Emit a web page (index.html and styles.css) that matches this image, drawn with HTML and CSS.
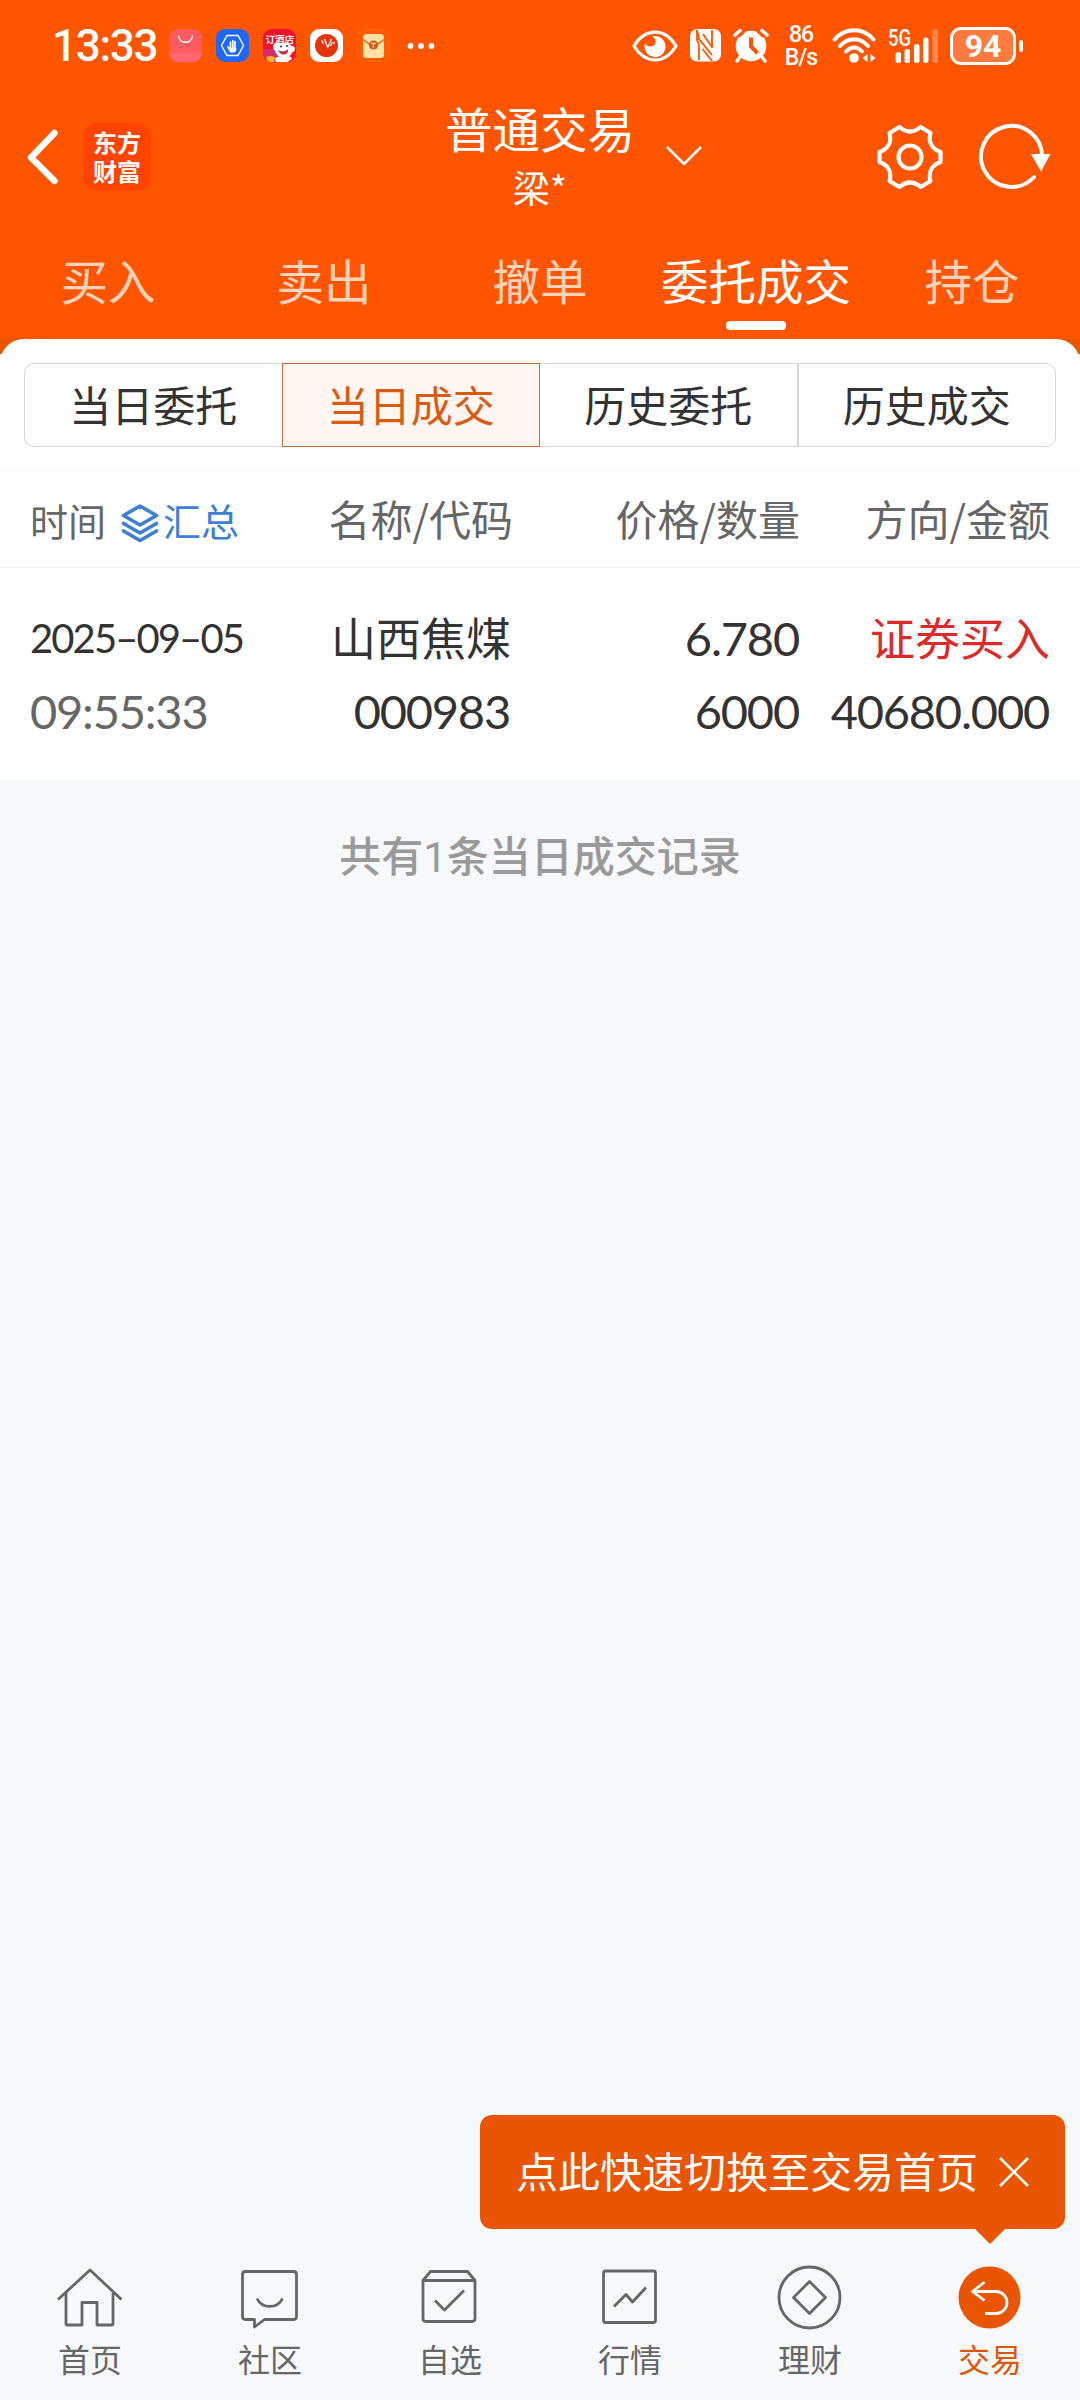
FILE: index.html
```html
<!DOCTYPE html>
<html lang="zh-CN">
  <head>
    <meta charset="UTF-8">
    <meta name="viewport" content="width=device-width, initial-scale=1.0">
    <title>普通交易</title>
    <link rel="stylesheet" href="styles.css">
  </head>
  <body>
    <div class="top">
      <div class="status-bar">
        <span class="clock">13:33</span>
        <div class="app-icons">
          <svg width="33" height="33" viewBox="0 0 33 33">
            <rect width="33" height="33" rx="9" fill="#ff5a60"/>
            <path d="M0 24h33a9 9 0 0 1-9 9H9a9 9 0 0 1-9-9z" fill="#ff6872"/>
            <path d="M9.500 6.500c1 9 13 9 14 0" fill="none" stroke="#fff" stroke-width="1.500"/>
          </svg>
          <svg width="33" height="33" viewBox="0 0 33 33">
            <rect width="33" height="33" rx="9" fill="#1f68f5"/>
            <path d="M11 6.500h11l5.500 10-5.500 10H11l-5.500-10z" fill="none" stroke="#fff" stroke-width="1.400"/>
            <path d="M14.500 13v6M16.800 11.500v8M19 12.500v7" stroke="#fff" stroke-width="1.700" stroke-linecap="round"/>
            <path d="M11 16.500l3 2h6c1 3-.5 4.500-2 5h-3.500c-1-1-3-4-3.500-7z" fill="#fff"/>
          </svg>
          <svg width="33" height="33" viewBox="0 0 33 33">
            <rect width="33" height="33" rx="9" fill="#f0102c"/>
            <path d="M0 20h10l20 12-6 1H9a9 9 0 0 1-9-9z" fill="#d52a6c"/>
            <ellipse cx="21" cy="21" rx="9" ry="7.500" fill="#fff"/>
            <circle cx="14" cy="18" r="4" fill="#fff"/>
            <circle cx="29" cy="20" r="3" fill="#fff"/>
            <path d="M12 30c2-4 16-5 17 0l-5 3H13z" fill="#fff"/>
            <path d="M15 21c3 2 6 2 10-.5 1 5-7 8-10 .5z" fill="#c62a32"/>
            <circle cx="18" cy="17.500" r="1" fill="#333"/>
            <circle cx="24" cy="17" r="1" fill="#333"/>
            <path d="M3 28l4-1 5 1-1 5H8c-3 0-4-2-5-5z" fill="#ffb52c"/>
            <text class="app-text" x="2.500" y="14">订酒店</text>
          </svg>
          <svg width="33" height="33" viewBox="0 0 33 33">
            <rect width="33" height="33" rx="9" fill="#fff"/>
            <circle cx="16.500" cy="16.500" r="11.500" fill="#e63408"/>
            <path d="M11.500 11l2 4M14.500 10l3 8M17.500 19l4-9M20.500 17l2-4M23.500 15l1-2" stroke="#fff" stroke-width="1.300"/>
          </svg>
          <svg width="33" height="33" viewBox="0 0 33 33">
            <rect x=".5" y=".5" width="32" height="32" rx="9" fill="#ff5a00" stroke="#ff6b0a"/>
            <rect x="6" y="5" width="21" height="24" rx="3.500" fill="#ffe2a6"/>
            <path d="M6 10.500l7 5M27 10.500l-7 5" stroke="#c8641c" stroke-width="1.200"/>
            <circle cx="16.500" cy="16" r="4.600" fill="#d65a14"/>
            <path d="M14 14.300h5M16.500 14.300v4.500" stroke="#ffe2a6" stroke-width="1.300"/>
          </svg>
        </div>
        <svg class="more" width="28" height="8" viewBox="0 0 28 8" fill="#fff">
          <circle cx="3.500" cy="4" r="2.900"/><circle cx="14" cy="4" r="2.900"/><circle cx="24.500" cy="4" r="2.900"/>
        </svg>

        <div class="status-right">
          <svg width="48" height="34" viewBox="0 0 48 34">
            <path d="M3 17C14-1.500 34-1.500 45 17 34 35.500 14 35.500 3 17z" fill="none" stroke="#fff" stroke-width="3.200" stroke-linejoin="round"/>
            <path d="M21 7.500c4.500 2 5 8 .5 9.500-3.500 1.200-6-.5-7.500-2.500a10.500 10.500 0 1 0 7-7z" fill="#fff"/>
          </svg>
          <svg class="nfc" width="31" height="33" viewBox="0 0 31 33">
            <rect width="31" height="32.500" rx="7" fill="#fff"/>
            <g fill="none" stroke="#ff5500" stroke-width="1.800">
              <path d="M7 1v10q2 3 2 8v12M22 1v18"/>
              <path d="M7 1l2 9 13 16M13 5l9 13M12.500 20l9.500 12" />
            </g>
          </svg>
          <svg class="alarm" width="36" height="35" viewBox="0 0 36 35">
            <circle cx="18" cy="18" r="15.300" fill="#fff"/>
            <path d="M2 7l5-4.500M34 7l-5-4.500M7 29l-3 4M29 29l3 4" stroke="#fff" stroke-width="3.500" stroke-linecap="round"/>
            <path d="M6 9l6-6M30 9l-6-6" stroke="#ff5500" stroke-width="1.800"/>
            <path d="M18 9.500v9l6.500 6.500" fill="none" stroke="#ff5500" stroke-width="4"/>
          </svg>
          <div class="net-speed"><span>86</span><span>B/s</span></div>
          <svg class="wifi" width="45" height="36" viewBox="0 0 45 36">
            <g fill="none" stroke="#fff" stroke-width="4" stroke-linecap="round">
              <path d="M2.500 11.500C13-.8 31-.8 41.500 11.500"/>
              <path d="M8 18c8-9 20-9 28 0"/>
              <path d="M14 23.500c5-5.500 11-5.500 16 0"/>
            </g>
            <circle cx="22" cy="30" r="4.800" fill="#fff"/>
            <path d="M35.500 26v8l-5-4zM38.500 26v8l5-4z" fill="#fff"/>
          </svg>
          <svg class="signal" width="52" height="36" viewBox="0 0 52 36">
            <text class="g-text" x="0" y="18" textLength="23" lengthAdjust="spacingAndGlyphs">5G</text>
            <g fill="#fff">
              <rect x="7.500" y="24" width="5.500" height="11" rx="2.500"/>
              <rect x="16.500" y="21" width="5.500" height="14" rx="2.500"/>
              <rect x="26" y="16" width="5.500" height="19" rx="2.500"/>
              <rect x="35" y="9.500" width="5.500" height="25.500" rx="2.500"/>
              <rect x="44.500" y="1" width="5.500" height="34" rx="2.500" opacity=".3"/>
            </g>
          </svg>
          <div class="battery">94</div>
          <span class="battery-cap"></span>
        </div>
      </div>

      <header class="header">
        <div class="header-left">
          <svg width="34" height="58" viewBox="0 0 34 58">
            <path d="M29.500 5L6 29.500 29.500 53" fill="none" stroke="#fff" stroke-width="6.500" stroke-linecap="round" stroke-linejoin="round"/>
          </svg>
          <div class="logo"><span>东方</span><span>财富</span></div>
        </div>
        <div class="header-title">
          <h1>普通交易</h1>
          <p>梁*</p>
        </div>
        <div class="header-right">
          <svg class="down" width="38" height="22" viewBox="0 0 38 22">
            <path d="M2 2l17 17L36 2" fill="none" stroke="#fff" stroke-width="2.600"/>
          </svg>
          <svg class="gear" width="68" height="68" viewBox="0 0 68 68" fill="none" stroke="#fff" stroke-width="4.200" stroke-linejoin="round">
            <path d="M23.500 4Q34 13 44.500 4L54.500 10C52 19 56 26 64.500 29V39C56 42 52 49 54.500 58L44.500 64Q34 55 23.500 64L13.500 58C16 49 12 42 3.500 39V29C12 26 16 19 13.500 10Z"/>
            <circle cx="34" cy="34" r="11.500"/>
          </svg>
          <svg class="refresh" width="74" height="68" viewBox="0 0 74 68">
            <path d="M64 34A30.500 30.500 0 1 0 56 54" fill="none" stroke="#fff" stroke-width="4" stroke-linecap="round"/>
            <path d="M53 31h19.500l-9.500 17.500z" fill="#fff"/>
          </svg>
        </div>
      </header>

      <nav class="tabs">
        <a>买入</a>
        <a>卖出</a>
        <a>撤单</a>
        <a class="active">委托成交</a>
        <a>持仓</a>
      </nav>
    </div>

    <main>
      <div class="panel">
        <div class="segment">
          <a>当日委托</a>
          <a class="active">当日成交</a>
          <a>历史委托</a>
          <a>历史成交</a>
        </div>

        <div class="row row-head">
          <div class="col-time">
            <span>时间</span>
            <svg width="38" height="40" viewBox="0 0 38 40" fill="none" stroke="#3c7fd4" stroke-width="3.600" stroke-linejoin="round" stroke-linecap="round">
              <path d="M19 3L35.500 12.500 19 22 2.500 12.500z"/>
              <path d="M2.500 20.500L19 30l16.500-9.500M2.500 28L19 37.500 35.500 28"/>
            </svg>
            <span class="summary">汇总</span>
          </div>
          <div class="col-name">名称/代码</div>
          <div>价格/数量</div>
          <div>方向/金额</div>
        </div>

        <div class="row row-data">
          <div class="cell cell-time">
            <span class="date">2025–09–05</span>
            <span class="num gray">09:55:33</span>
          </div>
          <div class="cell">
            <span>山西焦煤</span>
            <span class="num">000983</span>
          </div>
          <div class="cell">
            <span class="num">6.780</span>
            <span class="num">6000</span>
          </div>
          <div class="cell">
            <span class="buy">证券买入</span>
            <span class="num">40680.000</span>
          </div>
        </div>
      </div>
      <p class="total">共有<span class="count">1</span>条当日成交记录</p>
    </main>

    <footer>
      <div class="tip">
        <span>点此快速切换至交易首页</span>
        <svg width="32" height="32" viewBox="0 0 32 32">
          <path d="M2 2l28 28M30 2L2 30" stroke="#fff" stroke-width="2.600"/>
        </svg>
      </div>
      <nav class="bottom-nav">
        <a>
          <svg viewBox="0 0 72 72">
            <path d="M4 37.500L36 8l31.500 29.500M12 31v30.500q0 1.500 1.500 1.500H28V40.500h15V63h14.500q1.500 0 1.500-1.500V31"/>
          </svg>
          首页
        </a>
        <a>
          <svg viewBox="0 0 72 72">
            <path d="M11.500 9.500h48q3 0 3 3v42q0 3-3 3h-29L20.500 65v-7.500h-9q-3 0-3-3v-42q0-3 3-3z"/>
            <path d="M23 36.500c5 10.500 20.500 10.500 25.500 0"/>
          </svg>
          社区
        </a>
        <a>
          <svg viewBox="0 0 72 72">
            <path d="M9 18.500l7.500-9h37l7.500 9v38q0 3-3 3H12q-3 0-3-3zH61M21 38.500l9.500 9.500L50 28.500"/>
          </svg>
          自选
        </a>
        <a>
          <svg viewBox="0 0 72 72">
            <rect x="9.500" y="9" width="52" height="51.500" rx="2"/>
            <path d="M20 44.500l12-12 6.500 7.500L52 25.500"/>
          </svg>
          行情
        </a>
        <a>
          <svg viewBox="0 0 72 72">
            <circle cx="35.500" cy="35.500" r="30.500"/>
            <path d="M35.500 19.500l16 16-16 16-16-16z"/>
          </svg>
          理财
        </a>
        <a class="active">
          <svg viewBox="0 0 72 72">
            <circle class="disc" cx="35.500" cy="35.500" r="31"/>
            <path d="M30.500 20L18.500 29.500 30.500 38.500M18.500 29.500H42a11 11 0 0 1 0 22H31"/>
          </svg>
          交易
        </a>
      </nav>
    </footer>
  </body>
</html>
```
FILE: styles.css
```css
* {
  box-sizing: border-box;
}

body {
  display: flex;
  flex-direction: column;
  width: 1080px;
  height: 2400px;
  margin: 0;
  background-color: #f7f8fa;
  color: #333;
  font-family: "Noto Sans CJK SC", sans-serif;
}

h1, p {
  margin: 0;
  font-weight: normal;
}

svg {
  display: block;
  flex-shrink: 0;
}

.top {
  height: 339px;
  background-color: #ff5500;
  color: #fff;
}

/* 状态栏 */
.status-bar {
  display: flex;
  align-items: center;
  height: 90px;
  padding: 1px 0 0 52px;
}

.clock {
  width: 117px;
  font: 500 44px/1 Roboto, sans-serif;
  letter-spacing: -1.300px;
}

.app-icons {
  display: flex;
  gap: 14px;
}

.app-text {
  font-size: 9.500px;
  font-weight: bold;
  fill: #fff;
}

.more {
  margin-left: 17px;
}

.status-right {
  display: flex;
  align-items: center;
  margin-left: auto;
  padding-right: 57px;
}

.nfc {
  margin-left: 11px;
}

.alarm {
  margin-left: 12px;
}

.net-speed {
  display: flex;
  flex-direction: column;
  width: 34px;
  margin-left: 15px;
  text-align: center;
  font: 500 23px/23px Roboto, sans-serif;
  letter-spacing: -1px;
}

.wifi {
  margin-left: 14px;
}

.signal {
  margin-left: 11px;
  overflow: visible;
}

.g-text {
  font: 500 23px Roboto, sans-serif;
  fill: #fff;
}

.battery {
  width: 66px;
  height: 38px;
  margin-left: 10px;
  border: 3px solid #fff;
  border-radius: 11px;
  background-color: #ff7a3c;
  text-align: center;
  font: bold 32px/33px Roboto, sans-serif;
}

.battery-cap {
  width: 4px;
  height: 12px;
  margin-left: 3px;
  border-radius: 2px;
  background-color: #fff;
}

/* 标题 */
.header {
  display: grid;
  grid-template-columns: 420px 240px 420px;
  height: 134px;
}

.header-left, .header-right {
  display: flex;
  align-items: center;
}

.header-left {
  padding-left: 25px;
}

.logo {
  display: flex;
  flex-direction: column;
  justify-content: center;
  align-items: center;
  width: 68px;
  height: 68px;
  margin-left: 24px;
  padding-bottom: 3px;
  border-radius: 14px;
  background-color: #ff4400;
  font-size: 24px;
  font-weight: bold;
  line-height: 29px;
}

.header-title {
  text-align: center;
}

.header-title h1 {
  padding-top: 8px;
  font-size: 47.500px;
  line-height: 60px;
}

.header-title p {
  font-size: 37px;
  line-height: 58px;
}

.header-right {
  padding-left: 5px;
}

.down {
  margin-bottom: 2px;
}

.gear {
  margin-left: 173px;
}

.refresh {
  margin-left: 34px;
}

/* 顶部标签 */
.tabs {
  display: grid;
  grid-template-columns: repeat(5, 1fr);
}

.tabs a {
  display: flex;
  flex-direction: column;
  align-items: center;
  color: #ffd3bc;
  font-size: 47.500px;
  line-height: 111px;
  height: 114px;
}

.tabs .active {
  color: #fff;
}

.tabs .active::after {
  content: "";
  width: 60px;
  height: 9px;
  margin-top: -14px;
  border-radius: 4px;
  background-color: #fff;
}

main {
  flex: 1;
  background: linear-gradient(#e85600, #e85600) top / 100% 15px no-repeat;
}

.panel {
  height: 441px;
  padding-top: 24px;
  border-radius: 24px 24px 0 0;
  background-color: #fff;
}

.segment {
  display: flex;
  height: 84px;
  margin: 0 24px 23px;
}

.segment a {
  flex: 1;
  border: 1px solid #d6d6d6;
  text-align: center;
  font-size: 42px;
  line-height: 79px;
}

.segment a:first-child {
  border-right: none;
  border-radius: 10px 0 0 10px;
}

.segment a:last-child {
  border-radius: 0 10px 10px 0;
}

.segment .active {
  border-color: #c06a38;
  background-color: #fff5f1;
  color: #d95b12;
}

.segment .active + a {
  border-left: none;
}

/* 成交列表 */
.row {
  display: grid;
  grid-template-columns: 240px 241px 289px 250px;
  padding: 0 30px;
  text-align: right;
}

.row-head {
  height: 98px;
  border-top: 1px solid #f7f7f7;
  border-bottom: 1px solid #eee;
  color: #666;
  font-size: 42px;
  line-height: 93px;
}

.col-time {
  display: flex;
  align-items: center;
  font-size: 38px;
}

.col-time svg {
  margin: 7px 4px 0 15px;
}

/* 比下方数据略靠右 */
.col-name {
  margin-right: -2px;
}

.summary {
  color: #3c7fd4;
}

.row-data {
  padding-top: 34px;
}

.cell {
  display: flex;
  flex-direction: column;
  font-size: 45px;
  line-height: 73px;
}

.cell span:not(.num):not(.date) {
  height: 73px;
  line-height: 69px;
}

.cell-time {
  text-align: left;
}

.num {
  font-family: Lato, sans-serif;
  font-size: 47px;
  letter-spacing: -1.200px;
  padding-right: 1px;
}

.date {
  font-family: Lato, sans-serif;
  font-size: 40px;
  letter-spacing: -1.900px;
}

.gray {
  color: #666;
}

.buy {
  color: #dc2a2a;
}

.total {
  padding-top: 44px;
  color: #999;
  text-align: center;
  font-size: 42px;
  font-weight: 500;
  line-height: 60px;
}

.count {
  font-family: Roboto, sans-serif;
  font-weight: normal;
}

/* 气泡提示 */
.tip {
  position: relative;
  display: flex;
  align-items: center;
  width: 585px;
  height: 114px;
  margin: 0 15px 0 auto;
  padding-left: 36px;
  border-radius: 12px;
  background-color: #e95502;
  color: #fff;
  font-size: 42px;
}

.tip span {
  padding-bottom: 6px;
}

.tip svg {
  margin-left: 20px;
}

.tip::after {
  content: "";
  position: absolute;
  top: 114px;
  right: 60px;
  border: 15px solid transparent;
  border-top-color: #e95502;
  border-bottom: none;
}

/* 底部导航 */
.bottom-nav {
  display: grid;
  grid-template-columns: repeat(6, 1fr);
  height: 171px;
  padding-top: 33px;
}

.bottom-nav a {
  display: flex;
  flex-direction: column;
  align-items: center;
  color: #666;
  font-size: 32px;
  line-height: 48px;
}

.bottom-nav svg {
  width: 72px;
  height: 72px;
  fill: none;
  stroke: #666;
  stroke-width: 2.800;
  stroke-linejoin: round;
}

.bottom-nav .active {
  color: #dc560e;
}

.bottom-nav .active svg {
  stroke: #fff;
}

.bottom-nav .disc {
  fill: #e95502;
  stroke: none;
}
```
